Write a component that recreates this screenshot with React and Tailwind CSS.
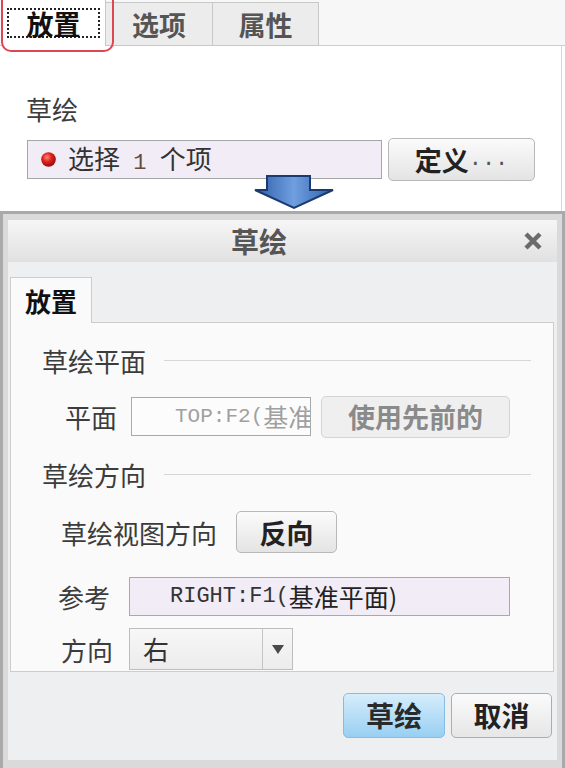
import React from "react";

const cjk = "font-['Noto_Sans_CJK_SC',sans-serif]";
const mono = "font-['Liberation_Mono','Noto_Sans_CJK_SC',monospace]";

const Arrow = () => (
  <svg
    className="absolute left-[254px] top-[175px]"
    width="80"
    height="35"
    viewBox="0 0 80 35"
  >
    <defs>
      <linearGradient id="arrowFill" x1="0" y1="0" x2="1" y2="0">
        <stop offset="0" stopColor="#2f5ea8" />
        <stop offset="0.5" stopColor="#6f9fe0" />
        <stop offset="1" stopColor="#2f5ea8" />
      </linearGradient>
    </defs>
    <polygon
      points="13,1 56,1 56,15 79,15 40,33 1,15 13,15"
      fill="url(#arrowFill)"
      stroke="#1c3a72"
      strokeWidth="2"
      strokeLinejoin="miter"
    />
  </svg>
);

const RedDot = () => (
  <svg width="15" height="15" viewBox="0 0 15 15" className="shrink-0">
    <defs>
      <radialGradient id="dotFill" cx="0.4" cy="0.35" r="0.7">
        <stop offset="0" stopColor="#ff8a80" />
        <stop offset="0.45" stopColor="#e0201c" />
        <stop offset="1" stopColor="#8a0a08" />
      </radialGradient>
    </defs>
    <circle cx="7.5" cy="7.5" r="7.3" fill="url(#dotFill)" />
  </svg>
);

const Label = ({ children, className = "" }) => (
  <span className={`text-[26px] leading-[31px] text-[#3c3c3c] whitespace-nowrap ${className}`}>
    {children}
  </span>
);

const Header = ({ children, className = "" }) => (
  <div className={`flex items-center pl-[31px] pr-[22px] ${className}`}>
    <Label>{children}</Label>
    <div className="flex-1 ml-[18px] h-px bg-[#d6d6d6]" />
  </div>
);

export default function App() {
  return (
    <div className={`w-[565px] h-[768px] bg-white overflow-hidden ${cjk}`}>
      {/* feature tabs */}
      <div className="relative h-[211px]">
        <div className="flex h-[46px] bg-[#f7f7f7]">
          <div className="w-[3px] border-b border-[#cfcfcf]" />
          <div className="w-[103px] bg-white border-r border-[#c8c8c8] pl-[4px] pt-[8px]">
            <div className="w-[93px] h-[30px] border-2 border-dotted border-[#222] flex items-center justify-center">
              <span className="text-[27px] leading-none font-bold text-[#111]">放置</span>
            </div>
          </div>
          <div className="w-[107px] mt-[2px] bg-[#ececec] border-t border-r border-b border-[#c8c8c8] flex items-center justify-center">
            <span className="text-[27px] leading-none font-bold text-[#555]">选项</span>
          </div>
          <div className="w-[106px] mt-[2px] bg-[#ececec] border-t border-r border-b border-[#c8c8c8] flex items-center justify-center">
            <span className="text-[27px] leading-none font-bold text-[#555]">属性</span>
          </div>
          <div className="flex-1 border-b border-[#cfcfcf]" />
        </div>
        <div className="w-[562px] h-[165px] bg-white border-r border-[#d8d8d8] pl-[26px] pt-[47px]">
          <Label>草绘</Label>
          <div className="flex items-center mt-[13px] h-[43px]">
            <div className="w-[355px] h-[39px] ml-px bg-[#f1ecf5] border border-[#a6a6a6] flex items-center pl-[13px]">
              <RedDot />
              <span className="ml-[12px] text-[26px] leading-none text-[#333] whitespace-nowrap">
                选择<span className={`${mono} text-[22px] text-[#6a4a3a]`}> 1 </span>个项
              </span>
            </div>
            <button className="ml-[6px] w-[147px] h-[43px] rounded-[5px] border border-[#b8b8b8] bg-gradient-to-b from-[#fbfbfb] to-[#e4e4e4] flex items-center justify-center">
              <span className="text-[27px] leading-none font-bold text-[#222]">定义</span>
              <span className={`${mono} text-[22px] leading-none text-[#555]`}>...</span>
            </button>
          </div>
        </div>
        <div className="absolute left-[1px] top-[-12px] w-[113px] h-[64px] border-2 border-[#dc4852] rounded-[10px]" />
        <Arrow />
      </div>

      {/* sketch dialog */}
      <div className="h-[557px] bg-[#dadada] border-t-[3px] border-x-[3px] border-[#a9a9a9] px-[5px] pt-[6px] pb-[8px] flex flex-col">
        <div className="h-[42px] bg-gradient-to-b from-[#f6f6f6] to-[#e1e1e1] flex items-center relative">
          <span className="ml-[223px] text-[28px] leading-none font-bold text-[#555]">草绘</span>
          <svg className="absolute left-[516px] top-[12px]" width="18" height="18" viewBox="0 0 18 18">
            <path d="M2 2 L16 16 M16 2 L2 16" stroke="#6b6b6b" strokeWidth="4.5" strokeLinecap="butt" />
          </svg>
        </div>
        <div className="flex-1 bg-[#eeeff0] flex flex-col">
          <div className="pt-[15px] pl-[2px]">
            <div className="w-[82px] h-[46px] -mb-px relative bg-[#fafafa] border-t border-l border-r border-[#cdcdcd] flex items-center justify-center">
              <span className="text-[26px] leading-none font-bold text-[#111]">放置</span>
            </div>
          </div>
          <div className="ml-[2px] mr-[3px] h-[350px] bg-[#fafafa] border border-[#cdcdcd] pt-[22px]">
            <Header>草绘平面</Header>

            <div className="flex items-center h-[43px] mt-[19px]">
              <Label className="ml-[54px]">平面</Label>
              <div className="ml-[14px] w-[180px] h-[39px] bg-[#fcfcfc] border border-[#a9a9a9] flex items-center pl-[43px] overflow-hidden whitespace-nowrap">
                <span className={`${mono} text-[21px] leading-none text-[#a0a0a0]`}>TOP:F2(</span>
                <span className="text-[25px] leading-none text-[#a0a0a0]">基准</span>
              </div>
              <div className="ml-[10px] w-[189px] h-[42px] rounded-[5px] border border-[#d4d4d4] bg-[#efefef] flex items-center justify-center">
                <span className="text-[27px] leading-none font-bold text-[#8a8a8a]">使用先前的</span>
              </div>
            </div>

            <Header className="mt-[21px]">草绘方向</Header>

            <div className="flex items-center h-[42px] mt-[21px]">
              <Label className="ml-[50px]">草绘视图方向</Label>
              <button className="ml-[19px] w-[101px] h-[42px] rounded-[5px] border border-[#b8b8b8] bg-gradient-to-b from-[#fbfbfb] to-[#e4e4e4] flex items-center justify-center">
                <span className="text-[27px] leading-none font-bold text-[#222]">反向</span>
              </button>
            </div>

            <div className="flex items-center h-[39px] mt-[24px]">
              <Label className="ml-[47px]">参考</Label>
              <div className="ml-[19px] w-[381px] h-[39px] bg-[#f1ecf5] border border-[#a9a9a9] flex items-center pl-[40px] whitespace-nowrap">
                <span className={`${mono} text-[22px] leading-none text-[#333]`}>RIGHT:F1(</span>
                <span className="text-[25px] leading-none text-[#222]">基准平面)</span>
              </div>
            </div>

            <div className="flex items-center h-[42px] mt-[12px]">
              <Label className="ml-[50px]">方向</Label>
              <div className="ml-[16px] w-[164px] h-[42px] bg-gradient-to-b from-[#f7f7f7] to-[#ececec] border border-[#bdbdbd] flex">
                <div className="w-[133px] flex items-center pl-[13px] border-r border-[#c4c4c4]">
                  <span className="text-[26px] leading-none text-[#333]">右</span>
                </div>
                <div className="flex-1 flex items-center justify-center">
                  <svg width="12" height="9" viewBox="0 0 12 9">
                    <polygon points="0,0 12,0 6,9" fill="#4a4a4a" />
                  </svg>
                </div>
              </div>
            </div>
          </div>
          <div className="flex-1 flex items-center justify-end pr-[5px] pb-[2px]">
            <button className="w-[102px] h-[45px] rounded-[5px] border border-[#85bde2] bg-gradient-to-b from-[#d6edfb] to-[#98cff2] flex items-center justify-center">
              <span className="text-[28px] leading-none font-bold text-[#2a2a2a]">草绘</span>
            </button>
            <button className="ml-[6px] w-[101px] h-[45px] rounded-[5px] border border-[#adadad] bg-gradient-to-b from-[#fbfbfb] to-[#e6e6e6] flex items-center justify-center">
              <span className="text-[28px] leading-none font-bold text-[#222]">取消</span>
            </button>
          </div>
        </div>
      </div>
    </div>
  );
}
